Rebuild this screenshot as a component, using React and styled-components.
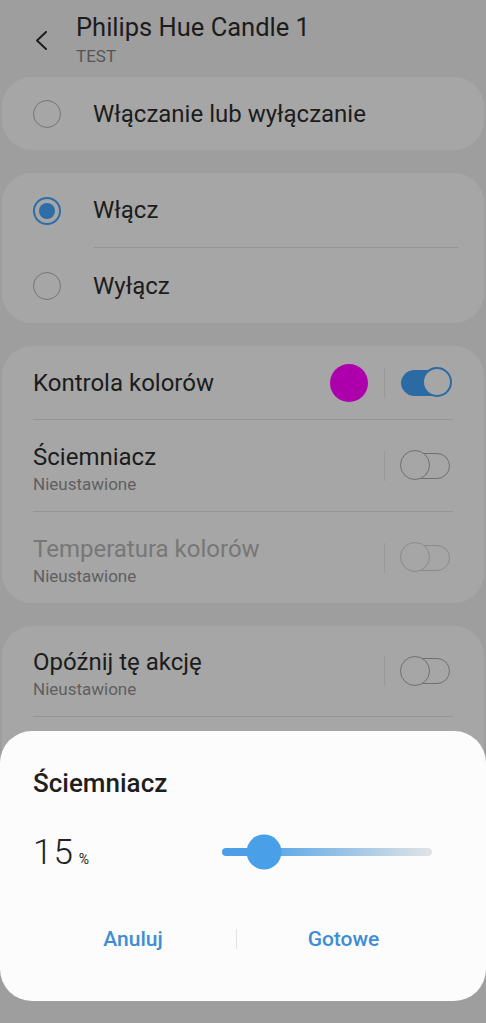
import React from "react";
import styled, { createGlobalStyle } from "styled-components";

const Global = createGlobalStyle`
  html, body { margin: 0; padding: 0; }
  body {
    background: #9e9e9e;
    font-family: Roboto, "Noto Sans", "Liberation Sans", sans-serif;
    overflow: hidden;
    height: 1023px;
  }
`;

const Page = styled.div`
  display: flex;
  flex-direction: column;
  gap: 23px;
  padding: 0 2px;
`;

const Header = styled.header`
  display: flex;
  align-items: flex-start;
  padding-left: 33px;
  margin-bottom: -23px;
  height: 77px;
  box-sizing: border-box;
`;

const BackBtn = styled.div`
  width: 41px;
  padding-top: 31px;
`;

const TitleBlock = styled.div`
  display: flex;
  flex-direction: column;
  padding-top: 12px;
`;

const Title = styled.div`
  font-size: 25.5px;
  line-height: 30px;
  color: #1c1c1c;
`;

const Sub = styled.div`
  font-size: 17px;
  line-height: 20px;
  color: #555;
  margin-top: 4px;
`;

const Card = styled.section`
  background: #a6a6a6;
  border-radius: 30px;
  display: flex;
  flex-direction: column;
  overflow: hidden;
`;

const RadioRow = styled.div`
  display: flex;
  align-items: center;
  height: ${(p) => p.$h || 75}px;
  padding-left: 31px;
  gap: 32px;
`;

const RadioLabel = styled.div`
  flex: 1;
  height: 100%;
  display: flex;
  align-items: center;
  font-size: 24px;
  color: #1c1c1c;
  margin-right: 25px;
  border-bottom: ${(p) => (p.$divider ? "1px solid #959595" : "none")};
  box-sizing: border-box;
`;

const Radio = styled.div`
  width: 28px;
  height: 28px;
  box-sizing: border-box;
  border-radius: 50%;
  border: ${(p) => (p.$on ? "2px solid #2d6ea8" : "1.5px solid #747474")};
  display: flex;
  align-items: center;
  justify-content: center;
  flex-shrink: 0;
  &::after {
    content: "";
    display: ${(p) => (p.$on ? "block" : "none")};
    width: 16px;
    height: 16px;
    border-radius: 50%;
    background: #2d6ea8;
  }
`;

const SettingRow = styled.div`
  margin: 0 31px 0 31px;
  height: ${(p) => p.$h}px;
  display: flex;
  align-items: center;
  border-bottom: ${(p) => (p.$divider ? "1px solid #959595" : "none")};
  box-sizing: border-box;
`;

const SettingText = styled.div`
  flex: 1;
  display: flex;
  flex-direction: column;
  padding-top: ${(p) => (p.$sub ? 6 : 0)}px;
`;

const SettingTitle = styled.div`
  font-size: 24px;
  line-height: 28px;
  color: ${(p) => (p.$disabled ? "#777" : "#1c1c1c")};
`;

const SettingSub = styled.div`
  font-size: 17px;
  line-height: 22px;
  margin-top: 2px;
  color: #5f5f5f;
`;

const Swatch = styled.div`
  width: 38px;
  height: 38px;
  border-radius: 50%;
  background: #ad00ac;
  margin-right: 16px;
`;

const VSep = styled.div`
  width: 1px;
  height: 30px;
  background: #999;
  margin-right: 16px;
`;

const Toggle = styled.div`
  position: relative;
  width: 49px;
  height: 26px;
  box-sizing: border-box;
  border-radius: 13px;
  margin-right: 3px;
  background: ${(p) => (p.$on ? "#2b6aa3" : "transparent")};
  border: 1.5px solid ${(p) => (p.$on ? "#2b6aa3" : p.$dim ? "#8a8a8a" : "#707070")};
  &::after {
    content: "";
    position: absolute;
    top: -3.5px;
    ${(p) => (p.$on ? "right: -2.5px;" : "left: -2.5px;")}
    width: 30px;
    height: 30px;
    box-sizing: border-box;
    border-radius: 50%;
    background: #a6a6a6;
    border: ${(p) => (p.$on ? "2px solid #2b6aa3" : `1.5px solid ${p.$dim ? "#8a8a8a" : "#707070"}`)};
  }
`;

const Dialog = styled.div`
  position: fixed;
  left: 0;
  right: 0;
  bottom: 22px;
  height: 270px;
  background: #fcfcfc;
  border-radius: 32px;
  display: flex;
  flex-direction: column;
  padding: 37px 0 0 33px;
  box-sizing: border-box;
`;

const DialogTitle = styled.div`
  font-size: 26px;
  line-height: 30px;
  font-weight: 500;
  color: #1e1e1e;
`;

const ValueRow = styled.div`
  margin-top: 34px;
  height: 40px;
  display: flex;
  align-items: center;
`;

const Value = styled.div`
  display: flex;
  align-items: baseline;
  gap: 5px;
  color: #222;
`;

const Num = styled.span`
  font-size: 35px;
  font-weight: 300;
  letter-spacing: 1px;
`;

const Pct = styled.span`
  font-size: 14px;
`;

const Track = styled.div`
  position: relative;
  margin-left: auto;
  margin-right: 54px;
  width: 210px;
  height: 8px;
  border-radius: 4px;
  background: linear-gradient(
    to right,
    #4c9fe6 0%,
    #4c9fe6 ${(p) => p.$pct}%,
    #63abe6 ${(p) => p.$pct + 8}%,
    #e2e4e6 100%
  );
`;

const Thumb = styled.div`
  position: absolute;
  top: 50%;
  width: 35px;
  height: 35px;
  border-radius: 50%;
  background: #4aa0e8;
  transform: translate(-50%, -50%);
`;

const Buttons = styled.div`
  margin-top: 47px;
  margin-left: -3px;
  margin-right: 36px;
  height: 40px;
  display: grid;
  grid-template-columns: 206px 1px 1fr;
  align-items: center;
`;

const DlgBtn = styled.button`
  border: 0;
  background: none;
  font-family: inherit;
  font-size: 21px;
  font-weight: 500;
  color: #3d8ed6;
  text-align: center;
  padding: 0;
`;

const BtnSep = styled.div`
  width: 1px;
  height: 20px;
  background: #e3e3e3;
`;

function Chevron() {
  return (
    <svg width="14" height="20" viewBox="0 0 14 20">
      <polyline points="11,1 2,9.5 11,18" fill="none" stroke="#1d1d1d" strokeWidth="2" strokeLinecap="round" strokeLinejoin="round" />
    </svg>
  );
}

export default function App() {
  const pct = 20;
  return (
    <>
      <Global />
      <Page>
        <Header>
          <BackBtn>
            <Chevron />
          </BackBtn>
          <TitleBlock>
            <Title>Philips Hue Candle 1</Title>
            <Sub>TEST</Sub>
          </TitleBlock>
        </Header>

        <Card>
          <RadioRow $h={73}>
            <Radio />
            <RadioLabel>Włączanie lub wyłączanie</RadioLabel>
          </RadioRow>
        </Card>

        <Card>
          <RadioRow>
            <Radio $on />
            <RadioLabel $divider>Włącz</RadioLabel>
          </RadioRow>
          <RadioRow>
            <Radio />
            <RadioLabel>Wyłącz</RadioLabel>
          </RadioRow>
        </Card>

        <Card>
          <SettingRow $h={74} $divider>
            <SettingText>
              <SettingTitle>Kontrola kolorów</SettingTitle>
            </SettingText>
            <Swatch />
            <VSep />
            <Toggle $on />
          </SettingRow>
          <SettingRow $h={92} $divider>
            <SettingText $sub>
              <SettingTitle>Ściemniacz</SettingTitle>
              <SettingSub>Nieustawione</SettingSub>
            </SettingText>
            <VSep />
            <Toggle />
          </SettingRow>
          <SettingRow $h={91}>
            <SettingText $sub>
              <SettingTitle $disabled>Temperatura kolorów</SettingTitle>
              <SettingSub>Nieustawione</SettingSub>
            </SettingText>
            <VSep />
            <Toggle $dim />
          </SettingRow>
        </Card>

        <Card>
          <SettingRow $h={91} $divider>
            <SettingText $sub>
              <SettingTitle>Opóźnij tę akcję</SettingTitle>
              <SettingSub>Nieustawione</SettingSub>
            </SettingText>
            <VSep />
            <Toggle />
          </SettingRow>
          <SettingRow $h={90} />
        </Card>
      </Page>

      <Dialog>
        <DialogTitle>Ściemniacz</DialogTitle>
        <ValueRow>
          <Value>
            <Num>15</Num>
            <Pct>%</Pct>
          </Value>
          <Track $pct={pct}>
            <Thumb style={{ left: `${pct}%` }} />
          </Track>
        </ValueRow>
        <Buttons>
          <DlgBtn>Anuluj</DlgBtn>
          <BtnSep />
          <DlgBtn>Gotowe</DlgBtn>
        </Buttons>
      </Dialog>
    </>
  );
}
